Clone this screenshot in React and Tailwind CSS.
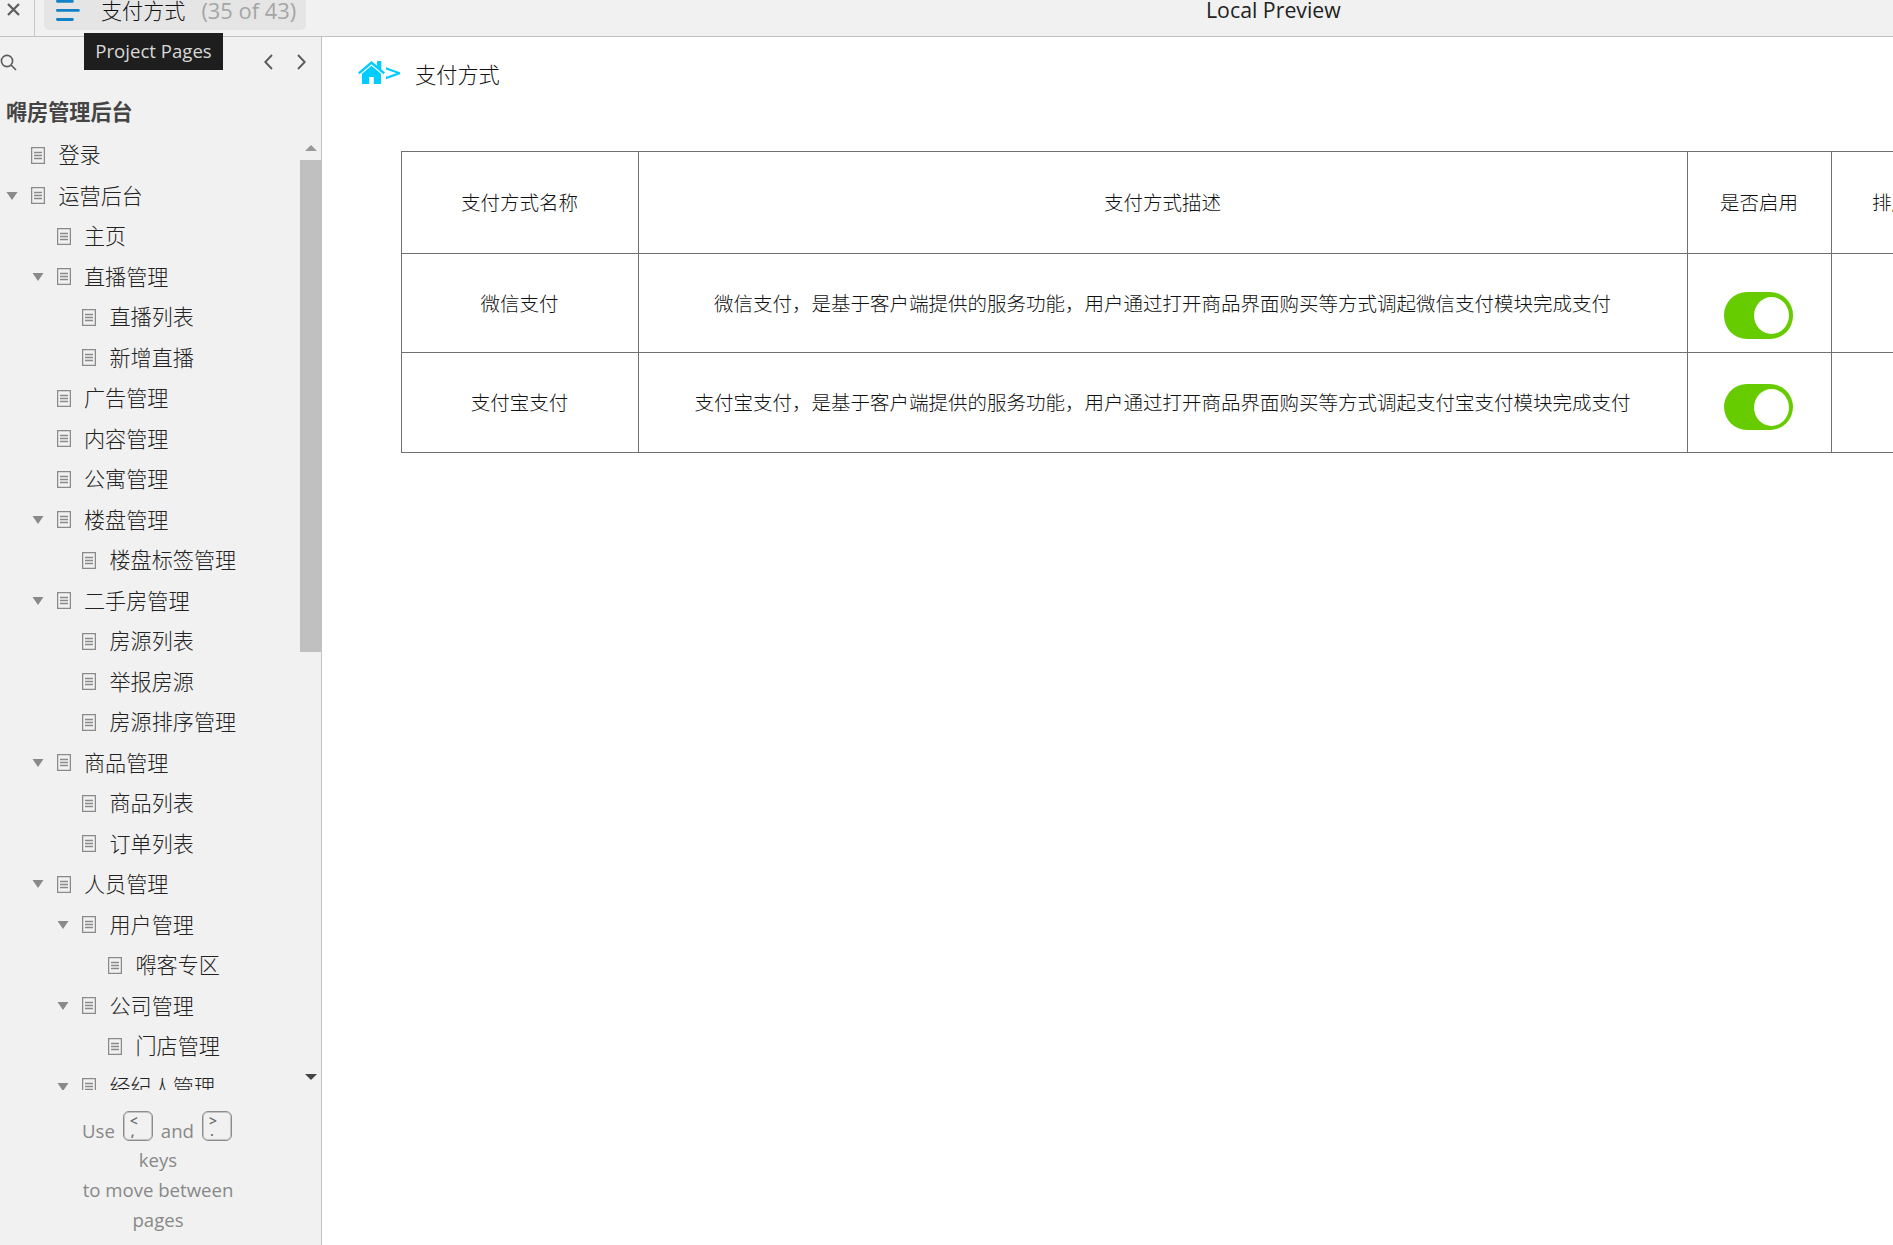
import React, { useState } from 'react'

const pages = [
  { name: '登录', level: 0 },
  { name: '运营后台', level: 0, open: true },
  { name: '主页', level: 1 },
  { name: '直播管理', level: 1, open: true },
  { name: '直播列表', level: 2 },
  { name: '新增直播', level: 2 },
  { name: '广告管理', level: 1 },
  { name: '内容管理', level: 1 },
  { name: '公寓管理', level: 1 },
  { name: '楼盘管理', level: 1, open: true },
  { name: '楼盘标签管理', level: 2 },
  { name: '二手房管理', level: 1, open: true },
  { name: '房源列表', level: 2 },
  { name: '举报房源', level: 2 },
  { name: '房源排序管理', level: 2 },
  { name: '商品管理', level: 1, open: true },
  { name: '商品列表', level: 2 },
  { name: '订单列表', level: 2 },
  { name: '人员管理', level: 1, open: true },
  { name: '用户管理', level: 2, open: true },
  { name: '嘚客专区', level: 3 },
  { name: '公司管理', level: 2, open: true },
  { name: '门店管理', level: 3 },
  { name: '经纪人管理', level: 2, open: true },
]

const indents = ['pl-[5px]', 'pl-[30.5px]', 'pl-[56px]', 'pl-[82px]']

const payments = [
  {
    name: '微信支付',
    desc: '微信支付，是基于客户端提供的服务功能，用户通过打开商品界面购买等方式调起微信支付模块完成支付',
    rowClass: 'h-[99px]',
    switchClass: 'mt-[25px] h-[47px]',
  },
  {
    name: '支付宝支付',
    desc: '支付宝支付，是基于客户端提供的服务功能，用户通过打开商品界面购买等方式调起支付宝支付模块完成支付',
    rowClass: 'h-[100px]',
    switchClass: 'mt-[9px] h-[46px]',
  },
]

const PageIcon = () => (
  <svg className='w-[14px] h-[17px] shrink-0' viewBox='0 0 14 17' fill='none' stroke='#8a8a8a' strokeWidth='1.3'>
    <rect x='0.6' y='0.6' width='12.8' height='15.8' />
    <path d='M3 5.5h8M3 8.5h8M3 11.5h8' />
  </svg>
)

const Chevron = ({ d }) => (
  <svg className='w-[9px] h-[16px]' viewBox='0 0 9 16' fill='none' stroke='#5c5c5c' strokeWidth='1.9'>
    <path d={d} />
  </svg>
)

const Key = ({ top, bottom }) => (
  <span className='flex flex-col w-[30px] h-[30px] rounded-[6px] border border-[#8c8c8c] shadow-[inset_0_0_0_1px_#c4c4c4] pl-[6px] pt-[2px] text-left text-[14px] leading-[14px] font-semibold text-[#6a6a6a]'>
    <span>{top}</span>
    <span className='pl-[1px] leading-[5px]'>{bottom}</span>
  </span>
)

const TopBar = () => (
  <header className='flex h-[37px] shrink-0 border-b border-[#c2c2c2] bg-[#f1f1f1]'>
    <div className='w-[35px] h-full border-r border-[#c8c8c8] pl-[7px] pt-[3px]'>
      <svg className='w-[13px] h-[13px]' viewBox='0 0 13 13' stroke='#5c5c5c' strokeWidth='2.2'>
        <path d='M1 1l11 11M12 1L1 12' />
      </svg>
    </div>
    <div className='ml-[9px] w-[262px] h-[30px] rounded-b-[5px] bg-[#e5e5e5] flex'>
      <svg className='w-[24px] h-[22px] ml-[12px] shrink-0' viewBox='0 0 24 22' stroke='#1082c5' strokeWidth='2.8' strokeLinecap='round'>
        <path d='M1.400 1.300h15M1.400 10.400h21M1.400 19.500h15' />
      </svg>
      <span className='ml-[21px] text-[21.1px] leading-[22px] font-light text-[#111] whitespace-nowrap'>支付方式</span>
      <span className='ml-[16px] text-[21.9px] leading-[22px] text-[#a5a5a5] whitespace-nowrap'>(35 of 43)</span>
    </div>
    <div className='ml-[900px] text-[21.3px] leading-[19px] text-[#222] whitespace-nowrap'>Local Preview</div>
  </header>
)

const Sidebar = () => (
  <aside className='flex flex-col w-[322px] shrink-0 border-r border-[#c2c2c2] bg-[#f1f1f1]'>
    <div className='flex items-start h-[54px] pt-[17px] shrink-0'>
      <svg className='w-[17px] h-[17px]' viewBox='0 0 17 17' fill='none' stroke='#5c5c5c' strokeWidth='1.6'>
        <circle cx='7' cy='7' r='5.6' />
        <path d='M11 11l5 5' />
      </svg>
      <div className='ml-[247px] flex gap-[24px]'>
        <Chevron d='M8 1L1.300 8L8 15' />
        <Chevron d='M1 1l6.700 7L1 15' />
      </div>
    </div>
    <div className='h-[43px] shrink-0 pl-[6px] text-[21.1px] leading-[41px] font-bold text-[#444]'>嘚房管理后台</div>
    <div className='flex h-[956px] shrink-0'>
      <ul className='flex-1 overflow-hidden pt-[1px]'>
        {pages.map((page) => (
          <li key={page.name} className={`flex items-center h-[40.5px] ${indents[page.level]}`}>
            <svg className='w-[14px] h-[8px] shrink-0' viewBox='0 0 14 8' fill='#8a8a8a'>
              {page.open && <path d='M1.500 0h11L7 8z' />}
            </svg>
            <span className='w-[12px] shrink-0' />
            <PageIcon />
            <span className='ml-[13.5px] text-[21.1px] leading-[38px] font-light text-[#222] whitespace-nowrap'>{page.name}</span>
          </li>
        ))}
      </ul>
      <div className='flex flex-col items-center w-[21px]'>
        <svg className='w-[12px] h-[6px] mt-[11px] shrink-0' viewBox='0 0 12 6' fill='#999'>
          <path d='M6 0l6 6H0z' />
        </svg>
        <div className='w-[21px] h-[492px] mt-[9px] bg-[#c0c0c0] shrink-0' />
        <svg className='w-[12px] h-[6px] mt-auto mb-[10px] shrink-0' viewBox='0 0 12 6' fill='#444'>
          <path d='M0 0h12L6 6z' />
        </svg>
      </div>
    </div>
    <div className='pt-[21px] pr-[5px] text-center text-[18.600px] leading-[30px] text-[#888]'>
      <div className='flex justify-center items-start h-[34px] gap-[8px] pr-[2px]'>
        <span className='pt-[5px]'>Use</span>
        <Key top='<' bottom=',' />
        <span className='pt-[5px]'>and</span>
        <Key top='>' bottom='.' />
      </div>
      <div>keys</div>
      <div>to move between</div>
      <div>pages</div>
    </div>
  </aside>
)

const Switch = ({ className }) => {
  const [enabled, setEnabled] = useState(true)

  return (
    <button
      onClick={() => setEnabled(!enabled)}
      className={`flex items-center w-[69px] mr-[2px] rounded-[23px] ${enabled ? 'justify-end pr-[4px] bg-[#66cc00]' : 'pl-[4px] bg-[#ccc]'} ${className}`}
    >
      <span className='w-[35px] h-[37px] rounded-[50%] bg-white' />
    </button>
  )
}

const PaymentTable = () => (
  <div className='w-[1600px] ml-[79px] border-l border-t border-[#707070] text-[19.5px] font-light text-[#111]'>
    <div className='flex h-[102px] border-b border-[#707070]'>
      <div className='flex items-center justify-center w-[237px] pr-[1px] border-r border-[#707070]'>支付方式名称</div>
      <div className='flex items-center justify-center w-[1049px] pr-[1px] border-r border-[#707070]'>支付方式描述</div>
      <div className='flex items-center justify-center w-[144px] pr-[1px] border-r border-[#707070]'>是否启用</div>
      <div className='flex items-center pl-[40px]'>排序</div>
    </div>
    {payments.map((item) => (
      <div key={item.name} className={`flex border-b border-[#707070] ${item.rowClass}`}>
        <div className='flex items-center justify-center w-[237px] pt-[1px] pr-[1px] border-r border-[#707070]'>{item.name}</div>
        <div className='flex items-center justify-center w-[1049px] pt-[1px] pr-[1px] border-r border-[#707070] whitespace-nowrap'>{item.desc}</div>
        <div className='flex items-center justify-center w-[144px] border-r border-[#707070]'>
          <Switch className={item.switchClass} />
        </div>
      </div>
    ))}
  </div>
)

const App = () => {
  return (
    <div className='relative flex flex-col w-full h-screen overflow-hidden bg-white font-["Open_Sans","Noto_Sans_CJK_SC",sans-serif]'>
      <TopBar />
      <div className='flex flex-1 min-h-0'>
        <Sidebar />
        <main className='flex-1 min-w-0 overflow-hidden'>
          <div className='flex items-start h-[114px] pt-[24px] pl-[36px]'>
            <svg className='w-[42px] h-[23px] shrink-0' viewBox='0 0 42 23' fill='#00ccff'>
              <path d='M13.500 0L0 11.500l1.500 1.800L13.500 3.200l12 10.100 1.500-1.800-3.700-3.200V0h-4.200v4.700z' />
              <path d='M13.500 4.800L4 12.800V23h7.200v-7h4.600v7H23V12.800z' />
              <path d='M28 6.200l14 5v2l-14 5v-2.400l10.500-3.600L28 8.600z' />
            </svg>
            <span className='ml-[15px] text-[21.2px] leading-[28px] font-light text-[#111]'>支付方式</span>
          </div>
          <PaymentTable />
        </main>
      </div>
      <div className='absolute left-[84px] top-[33px] w-[139px] h-[37px] bg-[#1e1e1e] text-center text-[18.600px] leading-[36px] text-[#d8d8d8] whitespace-nowrap'>Project Pages</div>
    </div>
  )
}

export default App
